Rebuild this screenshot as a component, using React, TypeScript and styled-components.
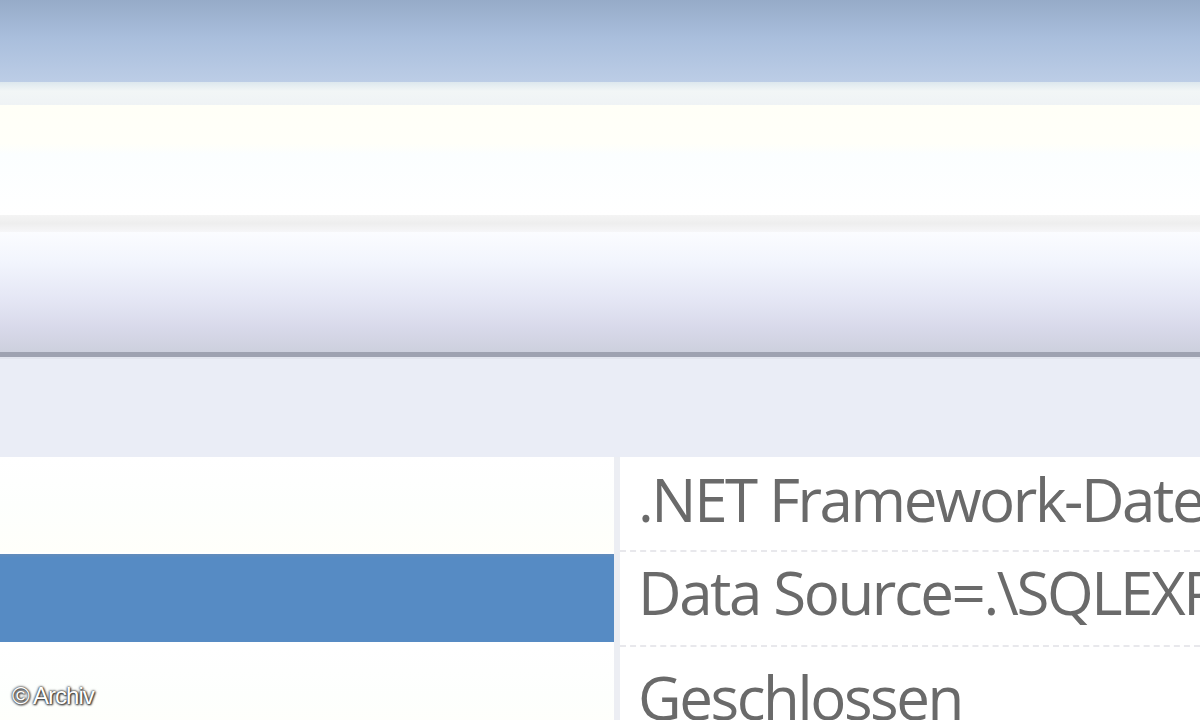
import { Fragment } from "react";
import styled, { createGlobalStyle } from "styled-components";

const GlobalStyle = createGlobalStyle`
  html, body {
    margin: 0;
    padding: 0;
    background: #ffffff;
    overflow: hidden;
  }
  #root {
    width: 1200px;
    height: 720px;
  }
`;

const Window = styled.div`
  position: relative;
  width: 1200px;
  height: 720px;
  display: flex;
  flex-direction: column;
  overflow: hidden;
  background: #ffffff;
`;

const TitleBar = styled.div`
  height: 82px;
  flex-shrink: 0;
  background: linear-gradient(to bottom, #96abc8 0%, #a9bedc 45%, #bccde6 100%);
`;

const TitleEdge = styled.div`
  height: 23px;
  flex-shrink: 0;
  background: linear-gradient(to bottom, #dde8ee 0%, #f2f6f6 40%, #eff3f5 100%);
`;

const ComboArea = styled.div`
  height: 110px;
  flex-shrink: 0;
  background: linear-gradient(to bottom, #fffff7 0%, #fffff9 35%, #fbfeff 45%, #ffffff 100%);
`;

const Separator = styled.div`
  height: 17px;
  flex-shrink: 0;
  background: linear-gradient(to bottom, #f4f4f4 0%, #eeeeee 50%, #f6f6f8 100%);
`;

const Toolbar = styled.div`
  height: 120px;
  flex-shrink: 0;
  background: linear-gradient(
    to bottom,
    #fbfcff 0%,
    #f2f5fd 25%,
    #e5e7f5 55%,
    #d8d9ea 80%,
    #cdd0de 100%
  );
  border-bottom: 5px solid #9ea2b1;
`;

const CategoryRow = styled.div`
  height: 98px;
  flex-shrink: 0;
  background: #eaedf6;
  border-top: 2px solid #e2e5ef;
`;

const Grid = styled.div`
  flex: 1;
  display: grid;
  grid-template-columns: 620px 1fr;
  grid-auto-rows: 95px;
`;

const NameCell = styled.div<{ $selected?: boolean }>`
  background: ${p =>
    p.$selected
      ? "linear-gradient(to bottom, #6a8db6 0%, #568bc4 6%, #568bc4 94%, #6a8fbc 100%)"
      : "linear-gradient(to bottom, #ffffff 0%, #fdfffd 50%, #fffffa 100%)"};
  background-clip: content-box;
  padding: ${p => (p.$selected ? "2px 0 5px" : "0")};
  border-right: 6px solid #eceef3;
`;

const ValueCell = styled.div<{ $last?: boolean; $top: number }>`
  padding: ${p => p.$top}px 0 0 18px;
  border-bottom: ${p => (p.$last ? "none" : "2px dashed #e8e8ec")};
  font-family: "Open Sans", "Noto Sans", sans-serif;
  font-size: 60px;
  line-height: 80px;
  letter-spacing: -2.4px;
  color: #6a6a6a;
  white-space: nowrap;
  overflow: hidden;
  background: #ffffff;
`;

const Watermark = styled.div`
  position: absolute;
  left: 12px;
  bottom: 10px;
  font-family: "Liberation Sans", Arial, sans-serif;
  font-size: 24px;
  letter-spacing: -1px;
  color: #ffffff;
  text-shadow: 0 0 2px #222, 0 0 3px #444, 1px 1px 2px #333;
`;

const rows = [
  { value: ".NET Framework-Datenanbieter für SQL Server", selected: false, top: 2 },
  { value: "Data Source=.\\SQLEXPRESS;Initial Catalog", selected: true, top: 0 },
  { value: "Geschlossen", selected: false, top: 10 },
];

export default function App() {
  return (
    <Window>
      <GlobalStyle />
      <TitleBar />
      <TitleEdge />
      <ComboArea />
      <Separator />
      <Toolbar />
      <CategoryRow />
      <Grid>
        {rows.map((row, i) => (
          <Fragment key={i}>
            <NameCell $selected={row.selected} />
            <ValueCell $last={i === rows.length - 1} $top={row.top}>
              {row.value}
            </ValueCell>
          </Fragment>
        ))}
      </Grid>
      <Watermark>© Archiv</Watermark>
    </Window>
  );
}
